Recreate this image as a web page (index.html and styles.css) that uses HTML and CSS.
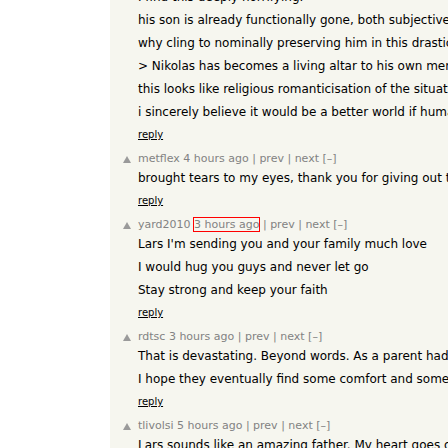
FILE: index.html
```html
<!DOCTYPE html>
<html>
<head>
<meta charset="utf-8">
<link rel="stylesheet" href="styles.css">
</head>
<body>
<div class="page">
  <div class="gutter"></div>
  <div class="thread">
    <div class="comment first">
      <div class="vote"></div>
      <div class="main">
        <div class="line">I find this deeply horrifying.</div>
        <div class="line">his son is already functionally gone, both subjectively and objectively.</div>
        <div class="line">why cling to nominally preserving him in this drastic state?</div>
        <div class="line">&gt; Nikolas has becomes a living altar to his own memory</div>
        <div class="line">this looks like religious romanticisation of the situation.</div>
        <div class="line">i sincerely believe it would be a better world if humans could let go.</div>
        <div class="reply"><a href="#">reply</a></div>
      </div>
    </div>
    <div class="comment">
      <div class="vote"><svg class="arrow" width="8" height="7" viewBox="0 0 8 7"><polygon points="4,0 8,7 0,7"/></svg></div>
      <div class="main">
        <div class="head">metflex <a href="#">4 hours ago</a> | <a href="#">prev</a> | <a href="#">next</a> [–]</div>
        <div class="line">brought tears to my eyes, thank you for giving out this update.</div>
        <div class="reply"><a href="#">reply</a></div>
      </div>
    </div>
    <div class="comment">
      <div class="vote"><svg class="arrow" width="8" height="7" viewBox="0 0 8 7"><polygon points="4,0 8,7 0,7"/></svg></div>
      <div class="main">
        <div class="head">yard2010 <a href="#" class="focus">3 hours ago</a> | <a href="#">prev</a> | <a href="#">next</a> [–]</div>
        <div class="line">Lars I'm sending you and your family much love</div>
        <div class="line">I would hug you guys and never let go</div>
        <div class="line">Stay strong and keep your faith</div>
        <div class="reply"><a href="#">reply</a></div>
      </div>
    </div>
    <div class="comment">
      <div class="vote"><svg class="arrow" width="8" height="7" viewBox="0 0 8 7"><polygon points="4,0 8,7 0,7"/></svg></div>
      <div class="main">
        <div class="head">rdtsc <a href="#">3 hours ago</a> | <a href="#">prev</a> | <a href="#">next</a> [–]</div>
        <div class="line">That is devastating. Beyond words. As a parent had to stop reading.</div>
        <div class="line">I hope they eventually find some comfort and some peace.</div>
        <div class="reply"><a href="#">reply</a></div>
      </div>
    </div>
    <div class="comment">
      <div class="vote"><svg class="arrow" width="8" height="7" viewBox="0 0 8 7"><polygon points="4,0 8,7 0,7"/></svg></div>
      <div class="main">
        <div class="head">tlivolsi <a href="#">5 hours ago</a> | <a href="#">prev</a> | <a href="#">next</a> [–]</div>
        <div class="line">Lars sounds like an amazing father. My heart goes out to him and his family.</div>
        <div class="reply"><a href="#">reply</a></div>
      </div>
    </div>
  </div>
</div>
</body>
</html>
```

FILE: styles.css
```css
html, body {
  margin: 0;
  padding: 0;
  background: #ffffff;
}
.page {
  display: flex;
  width: 448px;
  height: 448px;
  overflow: hidden;
  font-family: "DejaVu Sans", Verdana, sans-serif;
}
.gutter {
  width: 110px;
  flex: none;
  background: #ffffff;
}
.thread {
  flex: 1;
  min-width: 0;
  background: #f6f6ef;
  overflow: hidden;
}
.comment {
  display: flex;
  margin-bottom: 5px;
}
.comment.first {
  margin-top: -14px;
}
.vote {
  flex: none;
  width: 8px;
  padding-left: 13px;
  padding-right: 7px;
}
.arrow {
  display: block;
  margin-top: 6px;
  fill: #9a9a9a;
}
.main {
  flex: 1;
  min-width: 0;
  white-space: nowrap;
}
.head {
  font-size: 11px;
  line-height: 17px;
  color: #828282;
}
.head a {
  color: #828282;
  text-decoration: none;
}
.head a.focus {
  outline: 1px solid #ff0000;
  outline-offset: 0;
}
.line {
  font-size: 12px;
  line-height: 23px;
  color: #000000;
}
.reply {
  font-size: 10px;
  line-height: 21px;
}
.reply a {
  color: #000000;
  text-decoration: underline;
}
```
